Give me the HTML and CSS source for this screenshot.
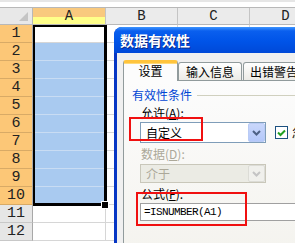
FILE: index.html
```html
<!DOCTYPE html>
<html lang="zh-CN">
<head>
    <meta charset="UTF-8">
    <title>数据有效性</title>
    <link rel="stylesheet" href="styles.css">
</head>
<body>
    <div class="sheet">
        <div class="topbar"></div>
        <div class="grid">
            <div class="corner"><span class="tri"></span></div>
            <div class="colhead sel">A</div>
            <div class="colhead">B</div>
            <div class="colhead">C</div>
            <div class="colhead">D</div>

            <div class="rowhead sel">1</div><div class="cell"></div><div class="cell"></div><div class="cell"></div><div class="cell"></div>
            <div class="rowhead sel">2</div><div class="cell hl"></div><div class="cell"></div><div class="cell"></div><div class="cell"></div>
            <div class="rowhead sel">3</div><div class="cell hl"></div><div class="cell"></div><div class="cell"></div><div class="cell"></div>
            <div class="rowhead sel">4</div><div class="cell hl"></div><div class="cell"></div><div class="cell"></div><div class="cell"></div>
            <div class="rowhead sel">5</div><div class="cell hl"></div><div class="cell"></div><div class="cell"></div><div class="cell"></div>
            <div class="rowhead sel">6</div><div class="cell hl"></div><div class="cell"></div><div class="cell"></div><div class="cell"></div>
            <div class="rowhead sel">7</div><div class="cell hl"></div><div class="cell"></div><div class="cell"></div><div class="cell"></div>
            <div class="rowhead sel">8</div><div class="cell hl"></div><div class="cell"></div><div class="cell"></div><div class="cell"></div>
            <div class="rowhead sel">9</div><div class="cell hl"></div><div class="cell"></div><div class="cell"></div><div class="cell"></div>
            <div class="rowhead sel">10</div><div class="cell hl"></div><div class="cell"></div><div class="cell"></div><div class="cell"></div>
            <div class="rowhead">11</div><div class="cell"></div><div class="cell"></div><div class="cell"></div><div class="cell"></div>
            <div class="rowhead">12</div><div class="cell"></div><div class="cell"></div><div class="cell"></div><div class="cell"></div>
        </div>
        <!-- selected range A1:A10 -->
        <div class="selection"><span class="handle"></span></div>
    </div>

    <div class="dialog">
        <div class="titlebar">数据有效性</div>
        <div class="dlg-body">
            <div class="tabs">
                <div class="tab active">设置</div>
                <div class="tab">输入信息</div>
                <div class="tab">出错警告</div>
            </div>
            <div class="page">
                <div class="group">有效性条件</div>
                <div class="fields">
                    <div class="label">允许(<u>A</u>):</div>
                    <div class="row">
                        <div class="combo">
                            <span class="combo-text">自定义</span>
                            <span class="combo-btn">
                                <svg width="9" height="6" viewBox="0 0 9 6"><path d="M1 1 L4.5 4.5 L8 1" fill="none" stroke="#4d6185" stroke-width="2"/></svg>
                            </span>
                        </div>
                        <span class="check">
                            <svg width="9" height="8" viewBox="0 0 9 8"><path d="M1 3.5 L3.5 6 L8 1.5" fill="none" stroke="#21a121" stroke-width="2"/></svg>
                        </span>
                        <span class="check-text">忽略空值</span>
                    </div>
                    <div class="label disabled">数据(<u>D</u>):</div>
                    <div class="combo off">
                        <span class="combo-text">介于</span>
                        <span class="combo-btn">
                            <svg width="9" height="6" viewBox="0 0 9 6"><path d="M1 1 L4.5 4.5 L8 1" fill="none" stroke="#c4c4c4" stroke-width="2"/></svg>
                        </span>
                    </div>
                    <div class="label">公式(<u>F</u>):</div>
                    <div class="input">=ISNUMBER(A1)</div>
                </div>
            </div>
        </div>
    </div>

    <!-- red annotation boxes -->
    <div class="mark mark-allow"></div>
    <div class="mark mark-formula"></div>
</body>
</html>
```

FILE: styles.css
```css
* {
    box-sizing: border-box;
}
body {
    margin: 0;
    width: 295px;
    height: 243px;
    overflow: hidden;
    position: relative;
    background: #fff;
    font-family: "Noto Sans CJK SC", sans-serif;
}
.sheet {
    position: relative;
}
.topbar {
    height: 8px;
    background: #fff;
    border-top: 2px solid #e6e6e6;
    border-bottom: 1px solid #b8b8b8;
}
.grid {
    display: grid;
    grid-template-columns: 33px 73px 72px 72px 72px;
    grid-template-rows: 17px repeat(12, 18px);
}
.corner {
    position: relative;
    background: #e8e8e8;
    border-right: 1px solid #b8b8b8;
    border-bottom: 1px solid #b8b8b8;
}
.tri {
    position: absolute;
    right: 4px;
    bottom: 3px;
    width: 0;
    height: 0;
    border-left: 9px solid transparent;
    border-bottom: 9px solid #c4c4c4;
}
.colhead {
    background: #ebebeb;
    border-right: 1px solid #c4c4c4;
    border-bottom: 1px solid #b8b8b8;
    font-family: "Liberation Mono", monospace;
    font-size: 14px;
    line-height: 17px;
    text-align: center;
    color: #222;
}
.colhead.sel {
    background: linear-gradient(#f9c97e 0, #f9c97e 9px, #ffff8a 9px);
}
.rowhead {
    background: #e6e6e6;
    border-right: 1px solid #a8a8a8;
    border-bottom: 1px solid #c8c8c8;
    font-family: "Liberation Mono", monospace;
    font-size: 15px;
    line-height: 18px;
    text-align: center;
    color: #222;
}
.rowhead.sel {
    background: #fcc777;
    border-bottom-color: #d8aa66;
}
.cell {
    border-right: 1px solid #d6d6d6;
    border-bottom: 1px solid #d6d6d6;
}
.cell.hl {
    background: #a9caf0;
    border-bottom-color: #c9dcf3;
}
.selection {
    position: absolute;
    left: 33px;
    top: 25px;
    width: 74px;
    height: 181px;
    border-style: solid;
    border-color: #000;
    border-width: 2px 3px 3px 2px;
}
.handle {
    position: absolute;
    right: -4px;
    bottom: -5px;
    width: 6px;
    height: 6px;
    background: #000;
    outline: 1px solid #fff;
}

/* dialog */
.dialog {
    position: absolute;
    left: 114px;
    top: 27px;
    width: 280px;
    height: 230px;
    display: flex;
    flex-direction: column;
    padding-left: 3px;
    background: linear-gradient(90deg, #0636c4, #1a5ef0);
    border-radius: 8px 0 0 0;
}
.titlebar {
    height: 26px;
    margin-left: -3px;
    padding-left: 6px;
    border-radius: 8px 0 0 0;
    background: linear-gradient(#3d95ff 0, #0a5fee 4px, #0054e8 14px, #0049d8 100%);
    color: #fff;
    font-size: 14px;
    font-weight: bold;
    line-height: 27px;
    text-shadow: 1px 1px #0a2a8a;
}
.dlg-body {
    flex: 1;
    display: flex;
    flex-direction: column;
    background: #f0f0f0;
    padding: 7px 0 0 6px;
}
.tabs {
    display: flex;
    align-items: flex-end;
    height: 20px;
    position: relative;
    z-index: 1;
}
.tab {
    flex-shrink: 0;
    height: 18px;
    padding: 0 6px;
    border: 1px solid #919b9c;
    border-bottom: none;
    border-radius: 3px 3px 0 0;
    background: linear-gradient(#ffffff, #ecebe6);
    font-size: 12px;
    line-height: 17px;
    text-align: center;
    color: #000;
    white-space: nowrap;
}
.tab:nth-child(2) {
    width: 64px;
}
.tab:nth-child(3) {
    width: 62px;
    margin-left: 1px;
}
.tab.active {
    width: 55px;
    height: 21px;
    margin-bottom: -1px;
    border-top: 3px solid #ffc43c;
    box-shadow: inset 0 1px 0 #ffd978;
    background: #fcfcfc;
    line-height: 16px;
}
.page {
    flex: 1;
    border: 1px solid #919b9c;
    border-right: none;
    background: linear-gradient(#fcfcfc, #f4f3ee);
    padding: 7px 0 0 8px;
    font-size: 12px;
}
.group {
    display: flex;
    align-items: center;
    height: 14px;
    color: #0046d5;
    line-height: 14px;
}
.group::after {
    content: "";
    flex: 1;
    height: 1px;
    margin-left: 5px;
    background: #d0d0bf;
}
.fields {
    padding-left: 8px;
}
.label {
    height: 14px;
    line-height: 14px;
    margin-top: 4px;
    padding-left: 1px;
    color: #000;
}
.label.disabled {
    color: #aca899;
}
.row {
    display: flex;
    align-items: center;
    margin-top: 2px;
}
.combo {
    flex-shrink: 0;
    display: flex;
    align-items: center;
    justify-content: space-between;
    width: 126px;
    height: 21px;
    border: 1px solid #7f9db9;
    background: #fff;
}
.combo-text {
    padding-left: 5px;
    font-size: 12px;
}
.combo-btn {
    display: flex;
    align-items: center;
    justify-content: center;
    width: 17px;
    height: 19px;
    border: 1px solid #b9cbf5;
    border-radius: 2px;
    background: linear-gradient(#c9d7fb, #b4c8fa);
}
.combo.off {
    height: 19px;
    margin-top: 3px;
    border-color: #c9c7ba;
    background: #ebebe4;
}
.combo.off .combo-text {
    color: #aca899;
}
.combo.off .combo-btn {
    height: 17px;
    border-color: #dcdcd6;
    background: #f0f0ec;
}
.check {
    flex-shrink: 0;
    display: flex;
    align-items: center;
    justify-content: center;
    width: 13px;
    height: 13px;
    margin-left: 9px;
    border: 1px solid #1c5180;
    background: #fff;
}
.check-text {
    margin-left: 4px;
    white-space: nowrap;
}
.input {
    width: 200px;
    height: 18px;
    margin-top: 2px;
    border: 1px solid #a0a0a0;
    background: #fff;
    padding-left: 3px;
    font-family: "Liberation Mono", monospace;
    font-size: 11px;
    letter-spacing: -0.6px;
    line-height: 16px;
    color: #000;
}
.mark {
    position: absolute;
    border: 2px solid #f01010;
}
.mark-allow {
    left: 129px;
    top: 117px;
    width: 74px;
    height: 24px;
}
.mark-formula {
    left: 136px;
    top: 192px;
    width: 111px;
    height: 34px;
}
```
